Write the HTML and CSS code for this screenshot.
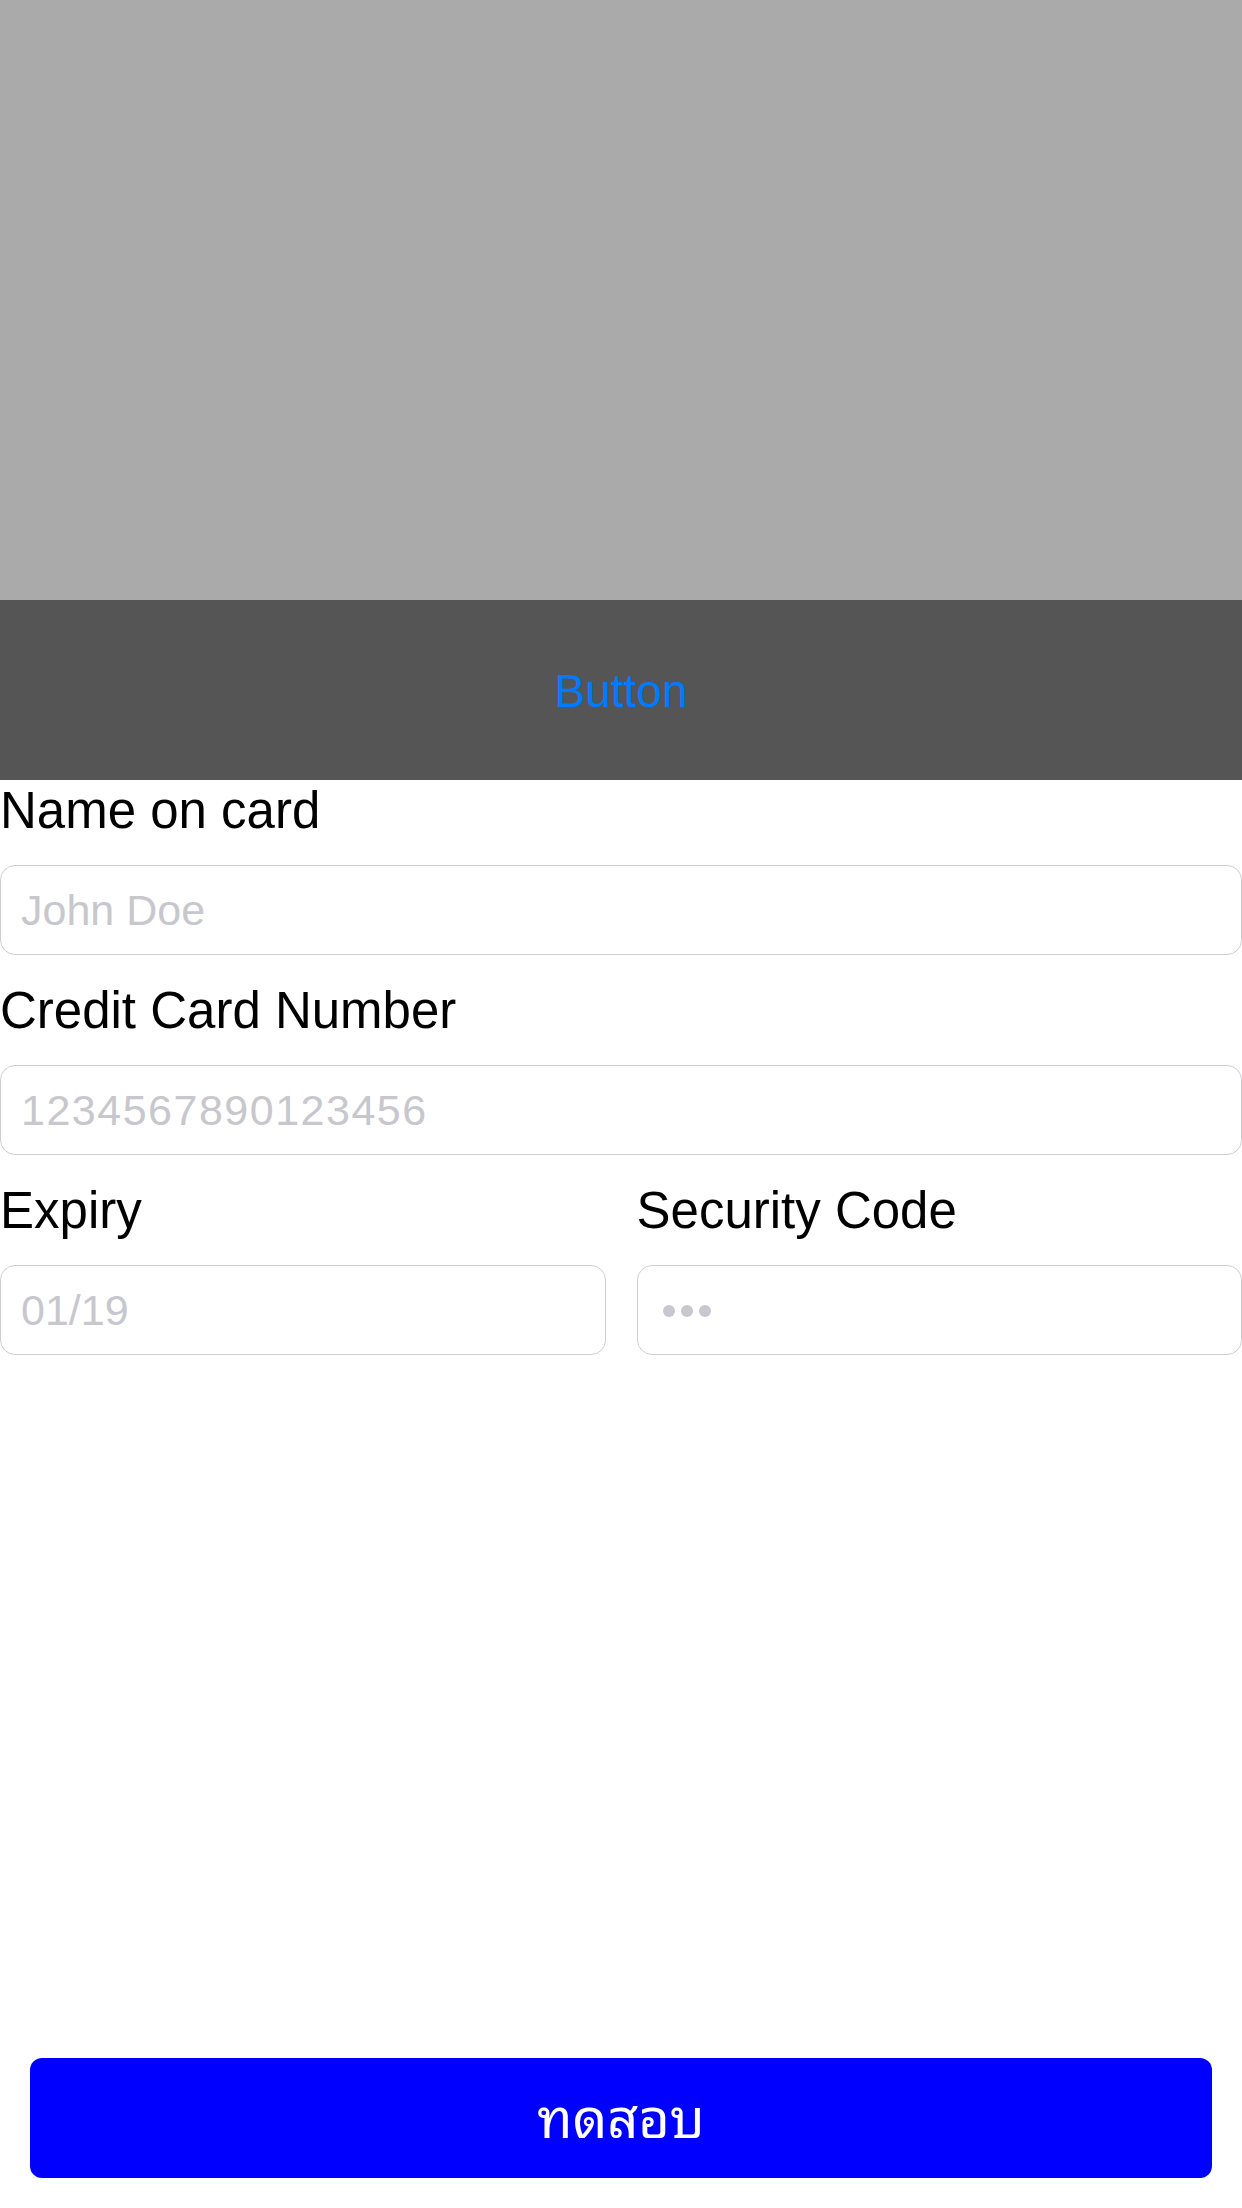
FILE: index.html
```html
<!DOCTYPE html>
<html lang="en">
<head>
<meta charset="utf-8">
<title>Payment</title>
<link rel="stylesheet" href="styles.css">
</head>
<body>
<div class="page">
  <div class="hero"></div>
  <div class="bar"><span class="bar-btn">Button</span></div>
  <div class="form">
    <div class="group">
      <div class="label">Name on card</div>
      <div class="field"><span class="ph">John Doe</span></div>
    </div>
    <div class="group">
      <div class="label">Credit Card Number</div>
      <div class="field"><span class="ph ph-num">1234567890123456</span></div>
    </div>
    <div class="row group">
      <div class="col">
        <div class="label">Expiry</div>
        <div class="field"><span class="ph">01/19</span></div>
      </div>
      <div class="col">
        <div class="label">Security Code</div>
        <div class="field"><span class="dots"><i></i><i></i><i></i></span></div>
      </div>
    </div>
  </div>
  <div class="submit"><span class="submit-text">ทดสอบ</span></div>
</div>
</body>
</html>
```

FILE: styles.css
```css
html, body {
  margin: 0;
  padding: 0;
  background: #ffffff;
}
body {
  font-family: "Liberation Sans", Arial, sans-serif;
}
.page {
  width: 1242px;
  height: 2208px;
  display: flex;
  flex-direction: column;
}
.hero {
  height: 600px;
  background: #aaaaaa;
}
.bar {
  height: 180px;
  background: #555555;
  display: flex;
  align-items: center;
  justify-content: center;
}
.bar-btn {
  color: #007aff;
  font-size: 46px;
  line-height: 54px;
  margin-top: 2px;
}
.form {
  display: flex;
  flex-direction: column;
  gap: 25px;
}
.label {
  font-size: 51px;
  line-height: 61px;
  color: #000;
  margin-bottom: 24px;
  white-space: nowrap;
}
.field {
  box-sizing: border-box;
  height: 90px;
  border: 1px solid #cfcfd3;
  border-radius: 15px;
  display: flex;
  align-items: center;
  padding: 0 20px;
}
.ph {
  color: #c7c7cd;
  font-size: 43px;
  line-height: 48px;
}
.ph-num {
  letter-spacing: 1.5px;
}
.row {
  display: grid;
  grid-template-columns: 1fr 1fr;
  column-gap: 31px;
}
.dots {
  display: flex;
  gap: 6px;
  padding-left: 5px;
  margin-top: 2px;
}
.dots i {
  display: block;
  width: 12px;
  height: 12px;
  border-radius: 50%;
  background: #c7c7cd;
}
.submit {
  margin: auto 30px 30px;
  height: 120px;
  border-radius: 12px;
  background: #0000ff;
  color: #ffffff;
  display: flex;
  align-items: center;
  justify-content: center;
  font-family: "Noto Sans Thai Looped", "Noto Looped Thai", "Loma", "Garuda", "Noto Sans Thai", "Noto Sans", "DejaVu Sans", sans-serif;
  font-size: 54px;
}
.submit-text {
  margin-bottom: 10px;
}
```
